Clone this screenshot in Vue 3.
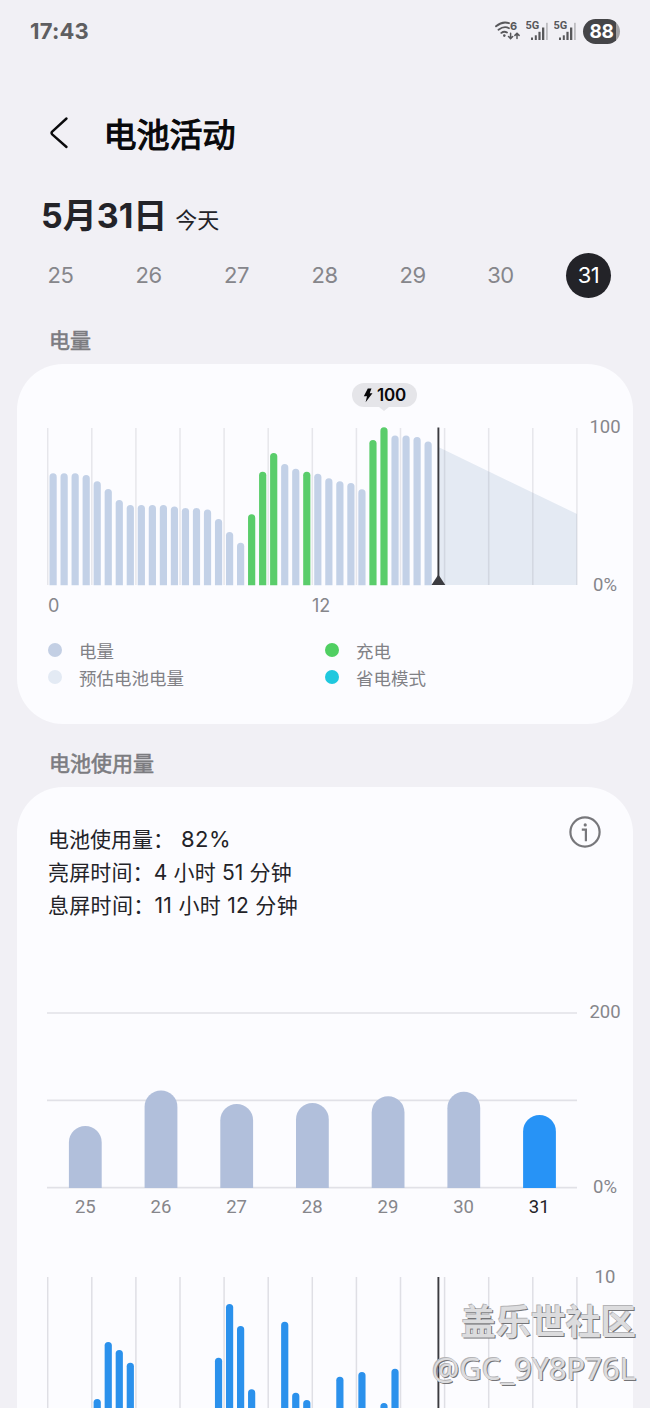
<script setup>
const days = [25, 26, 27, 28, 29, 30, 31]
const grid = Array.from({ length: 13 }, (_, i) => 0.7 + i * 44.1)

const level = [
  111.7, 111.7, 111.7, 110, 103.7, 96, 85, 80, 80, 80, 80, 78.5, 77, 77, 75.5, 66, 53, 42.3,
  70.7, 113.3, 132, 121, 116.3, 113.3, 111.3, 106.7, 103.7, 102, 95.7, 145, 157.7, 149.5, 149.5, 148, 143.5,
]
const charging = new Set([18, 19, 20, 23, 29, 30])
const hourly = [
  [4, 122], [5, 65], [6, 73], [7, 85.7], [15, 80.7], [16, 27], [17, 49], [18, 112.3],
  [21, 44.7], [22, 115.7], [23, 123], [26, 99.7], [28, 95], [30, 126], [31, 91.7],
]
const daily = [62, 97.5, 84, 85, 91.8, 96.2, 73]

const barX = (i) => 2 + i * 11.03
const roundTop = (x, top, bottom, w) => {
  const r = w / 2
  return `M${x} ${bottom}V${top + r}a${r} ${r} 0 0 1 ${w} 0V${bottom}z`
}
const legend = [
  ['电量', 'level'], ['充电', 'charge'], ['预估电池电量', 'estimate'], ['省电模式', 'saver'],
]
</script>

<template>
  <main class="screen">
    <header class="status">
      <span class="clock">17:43</span>
      <div class="status-icons">
        <svg class="wifi" width="27" height="22" viewBox="0 0 27 22" fill="none" stroke="#58585b" stroke-linecap="round">
          <path d="M1 6.3Q7.500 .8 14 3.200M3.500 9.800Q9 5.600 14 8.200M6.300 12.900Q9.200 10.800 12 12.600" stroke-width="1.8" />
          <circle cx="9.300" cy="15.600" r="1.300" fill="#58585b" stroke="none" />
          <path d="M15.600 13.300v5.200m-2.100-2 2.100 2.100 2.100-2.100M22 18.600v-5.200m-2.100 2L22 13.300l2.100 2.100" stroke-width="1.5" />
          <text x="15" y="9.800" class="six">6</text>
        </svg>
        <svg v-for="n in 2" :key="n" class="signal" width="24" height="22" viewBox="0 0 24 22">
          <text x="-.5" y="9" class="five-g">5G</text>
          <g fill="#58585b">
            <rect x="5" y="17.500" width="2" height="2.500" /><rect x="8.800" y="15.300" width="2" height="4.700" />
            <rect x="12.400" y="11.800" width="2.200" height="8.200" /><rect x="16" y="7.500" width="2.300" height="12.500" />
            <rect x="20" y="2.800" width="1.800" height="17.200" fill="#bdbdc1" />
          </g>
        </svg>
        <span class="battery">88</span>
      </div>
    </header>

    <div class="title-row">
      <svg width="20" height="34" viewBox="0 0 20 34" fill="none" stroke="#0a0a0c" stroke-width="2.4" stroke-linecap="round" stroke-linejoin="round">
        <path d="M17.500 2.500 3.200 15.600q-1.300 1.400 0 2.800L17.500 31" />
      </svg>
      <h1>电池活动</h1>
    </div>

    <div class="date"><strong>5月31日</strong><span>今天</span></div>

    <nav class="days">
      <span v-for="d in days" :key="d" :class="{ active: d === 31 }">{{ d }}</span>
    </nav>

    <h2 class="first">电量</h2>
    <section class="card level-card">
      <div class="tip-row">
        <div class="tip">
          <svg width="10" height="15" viewBox="0 0 10 15"><path d="M4.800 .5h3.700L6.700 5.300h2.800L2.600 14.300 4 8.300H.8z" fill="#08080a" /></svg>
          <span>100</span>
        </div>
      </div>
      <div class="plot">
        <svg width="531" height="160" viewBox="0 0 531 160">
          <path d="M391.300 20 530 87v71H391.300z" fill="#e4eaf3" />
          <path v-for="x in grid" :key="x" :d="`M${x} 1V158`" stroke="#747484" stroke-opacity=".16" stroke-width="1.500" />
          <path
            v-for="(h, i) in level" :key="i" :d="roundTop(barX(i) + .5, 158 - h, 158.3, 7.2)"
            :fill="charging.has(i) ? '#5acd6b' : '#c3d1e7'"
          />
          <path d="M391.400 .5V152" stroke="#3b3b40" stroke-width="1.900" />
          <path d="M391.400 147.500 398.300 158H384.500z" fill="#3b3b40" />
        </svg>
        <div class="axis level-axis"><span>100</span><span>0%</span></div>
      </div>
      <div class="hours"><span>0</span><span>12</span></div>
      <ul class="legend">
        <li v-for="[label, kind] in legend" :key="kind"><i :class="kind"></i>{{ label }}</li>
      </ul>
    </section>

    <h2 class="second">电池使用量</h2>
    <section class="card usage-card">
      <div class="summary">
        <div class="lines">
          <p class="l1">电池使用量：<span>82%</span></p>
          <p class="l2">亮屏时间：4 小时 51 分钟</p>
          <p class="l3">息屏时间：11 小时 12 分钟</p>
        </div>
        <svg width="32" height="32" viewBox="0 0 32 32" fill="none" stroke="#77777b" stroke-width="2.2">
          <circle cx="16" cy="16" r="14.600" />
          <path d="M12.800 13.700h4.100v11.500" /><circle cx="16.200" cy="8.900" r="1.600" fill="#77777b" stroke="none" />
        </svg>
      </div>
      <div class="plot">
        <svg width="531" height="178" viewBox="0 0 531 178">
          <path d="M0 2H530M0 89.300H530M0 176.700H530" stroke="#e1e1e7" stroke-width="1.700" />
          <path
            v-for="(h, i) in daily" :key="i" :d="roundTop(21.9 + i * 75.7, 177 - h, 177, 32.8)"
            :fill="i === 6 ? '#2793f6' : '#b1bfdb'"
          />
        </svg>
        <div class="axis usage-axis"><span>200</span><span>0%</span></div>
      </div>
      <div class="day-labels">
        <span v-for="d in days" :key="d" :class="{ today: d === 31 }">{{ d }}</span>
      </div>
      <div class="plot hourly">
        <svg width="531" height="140" viewBox="0 0 531 140">
          <path v-for="x in grid" :key="x" :d="`M${x} 0V140`" stroke="#dfdfe5" stroke-width="1.500" />
          <path v-for="[i, top] in hourly" :key="i" :d="roundTop(barX(i) + .5, top, 145, 7.2)" fill="#2b91ec" />
          <path d="M391.400 0V140" stroke="#3b3b40" stroke-width="1.900" />
        </svg>
        <div class="axis hour-axis"><span>10</span></div>
      </div>
    </section>

    <div class="watermark"><b>盖乐世社区</b><span>@GC_9Y8P76L</span></div>
  </main>
</template>

<style>
body { margin: 0; background: #f1f0f5; }
</style>

<style scoped>
* { box-sizing: border-box; }
.screen {
  position: relative; width: 650px; height: 1408px; overflow: hidden; background: #f1f0f5;
  display: flex; flex-direction: column; color: #232328;
  font-family: Inter, "Noto Sans CJK SC", sans-serif;
}
.status { height: 62px; padding: 0 30px 0 30px; display: flex; align-items: center; justify-content: space-between; flex: none; }
.clock { font-size: 22px; font-weight: 700; color: #5e5e61; letter-spacing: .2px; }
.status-icons { display: flex; align-items: center; }
.wifi { margin-right: 4px; }
.signal { margin-right: 4px; }
.signal + .battery { margin-left: 1px; }
.six { font: 700 11px Inter, sans-serif; fill: #58585b; stroke: none; }
.five-g { font: 700 11px Roboto, sans-serif; fill: #58585b; }
.battery {
  width: 37px; height: 25px; border-radius: 13px; display: flex; align-items: center; justify-content: center;
  background: linear-gradient(90deg, #454548 88%, #a2a2a5 88%); color: #fff; font-size: 19px; font-weight: 700; line-height: 1; letter-spacing: -.3px;
}
.title-row { height: 80px; margin-top: 31px; padding-left: 49px; display: flex; align-items: center; flex: none; }
h1 { margin: 3px 0 0 34.500px; font-size: 33px; line-height: 48px; font-weight: 400; -webkit-text-stroke: 1.100px #08080a; color: #08080a; }
.date { height: 60px; padding-left: 41px; margin-top: 12px; display: flex; align-items: baseline; flex: none; line-height: 62px; }
.date strong { font-size: 34px; font-weight: 700; letter-spacing: 0; }
.date span { font-size: 22px; margin-left: 8px; }
.days { height: 46px; margin-top: 7px; padding: 0 39px 0 38px; display: flex; justify-content: space-between; align-items: center; flex: none; }
.days span {
  width: 45px; height: 45px; border-radius: 50%; display: flex; align-items: center; justify-content: center;
  font-size: 22px; color: #86868b; letter-spacing: -.5px;
}
.days .active { color: #fff; background: #232328; }
h2 { margin: 0; padding-left: 49px; font-size: 21px; line-height: 30px; font-weight: 400; -webkit-text-stroke: .6px #7c7c80; color: #7c7c80; flex: none; }
.first { margin-top: 28px; }
.second { margin-top: 25px; }
.card { width: 616px; margin-left: 17px; background: #fcfcff; border-radius: 46px; flex: none; }
.level-card { height: 360px; margin-top: 8px; padding: 19px 0 0 30px; display: flex; flex-direction: column; }
.tip-row { height: 44px; padding-left: 305px; }
.tip {
  position: relative; width: 65px; height: 24px; border-radius: 12px; background: #e5e5e9; display: flex; align-items: center;
  justify-content: center; gap: 4px; font-size: 17px; line-height: 24px; font-weight: 600; color: #08080a; letter-spacing: -.2px;
}
.tip::after {
  content: ""; position: absolute; left: 27px; top: 24px; border: 5px solid transparent; border-bottom: 0; border-top: 4px solid #e5e5e9;
}
.plot { display: flex; align-items: flex-start; }
.plot svg { flex: none; display: block; }
.axis { flex: none; width: 54px; display: flex; flex-direction: column; justify-content: space-between; text-align: center; font: 18.500px/22px Roboto, sans-serif; color: #86868b; }
.level-axis { height: 180px; margin-top: -11px; margin-bottom: -9px; }
.hours { display: flex; margin-top: 7px; padding-left: 1px; font-size: 18px; line-height: 24px; color: #86868b; }
.hours span:first-child { width: 264px; }
.legend { margin: 20px 0 0; padding: 0; list-style: none; display: grid; grid-template-columns: 277px 1fr; font-size: 17.500px; line-height: 27px; color: #818186; }
.legend li { display: flex; align-items: center; height: 27px; }
.legend i { width: 14px; height: 14px; margin: -3px 17px 0 1px; border-radius: 50%; }
.level { background: #c3cfe4; }
.charge { background: #50cf62; }
.estimate { background: #e3eaf4; }
.saver { background: #1fc8de; }
.usage-card { height: 700px; margin-top: 8px; padding-left: 30px; }
.summary { height: 224px; padding: 29px 32px 0 1px; display: flex; justify-content: space-between; align-items: flex-start; }
.lines { padding-top: 7px; }
.lines p { margin: 0; font-size: 21px; line-height: 33px; white-space: pre; }
.l1 span { margin-left: 7px; font-size: 22px; letter-spacing: .5px; }
.l2 { letter-spacing: .15px; }
.l3 { letter-spacing: .3px; }
.usage-axis { height: 197px; margin-top: -10px; }
.day-labels { width: 530px; display: flex; padding-left: .500px; margin-top: -2px; font: 18.500px/22px Roboto, sans-serif; color: #86868b; }
.day-labels span { width: 75.700px; text-align: center; }
.day-labels .today { color: #232328; }
.hourly { margin-top: 59px; }
.hour-axis { margin-top: -11px; }
.watermark { position: absolute; right: 14px; top: 1297px; display: flex; flex-direction: column; align-items: flex-end; color: #dcdcde; text-shadow: 1px 1px 0 #747477, -1px -1px 0 #b4b4b7; white-space: nowrap; }
.watermark b { font-size: 35px; line-height: 50px; font-weight: 700; }
.watermark span { font: 30.500px/42px "Noto Sans", sans-serif; }
</style>
